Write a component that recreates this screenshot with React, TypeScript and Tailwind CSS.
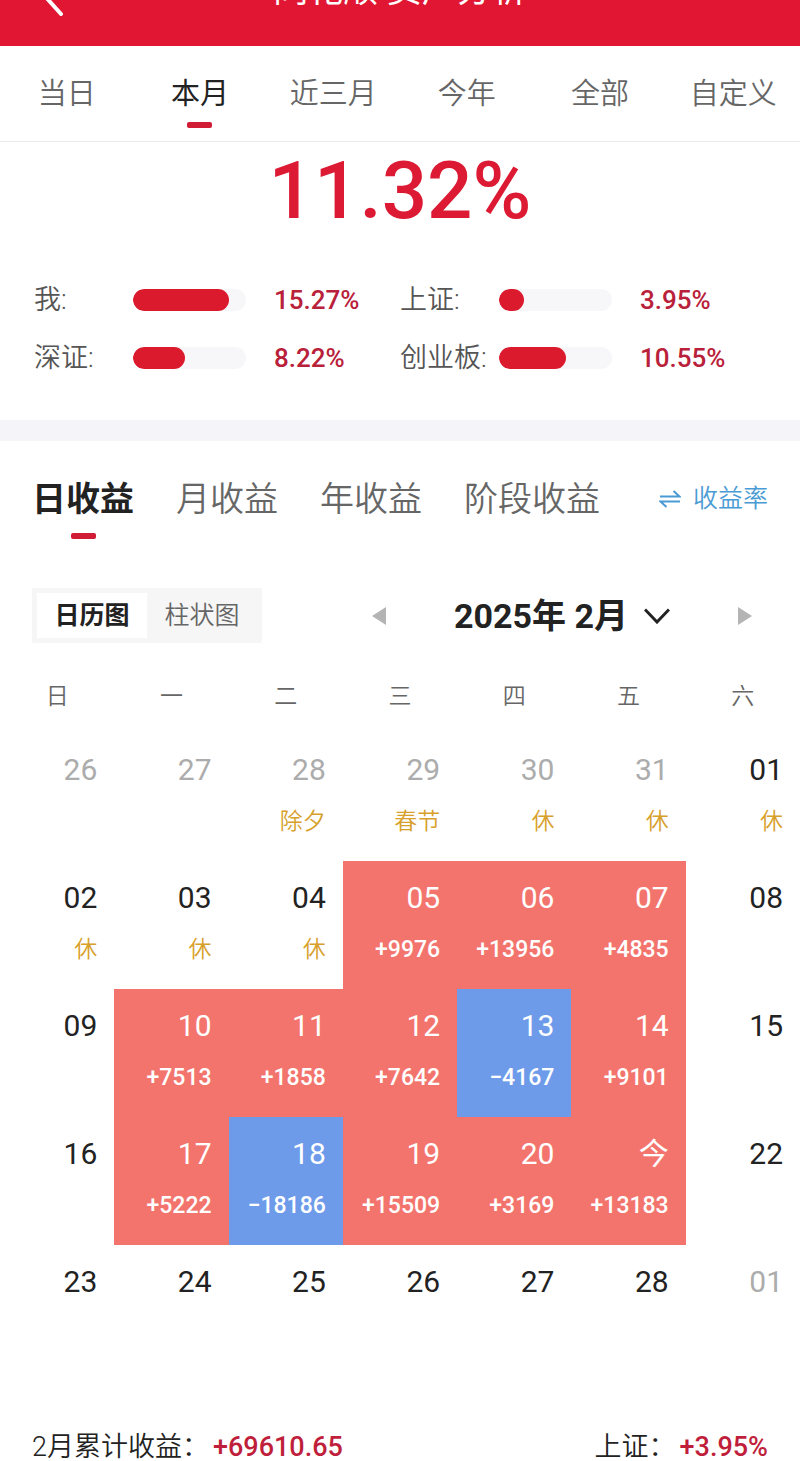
import { useState } from "react";
import clsx from "clsx";

type Day = {
  day: string;
  note?: string;
  profit?: number;
  outside?: boolean;
};

const ranges = ["当日", "本月", "近三月", "今年", "全部", "自定义"];

const benchmarks = [
  { name: "我", value: "15.27%", fill: 85 },
  { name: "上证", value: "3.95%", fill: 22 },
  { name: "深证", value: "8.22%", fill: 46 },
  { name: "创业板", value: "10.55%", fill: 59 },
];

const periods = ["日收益", "月收益", "年收益", "阶段收益"];

const views = ["日历图", "柱状图"];

const months = ["2025年 1月", "2025年 2月", "2025年 3月"];

const weekdays = ["日", "一", "二", "三", "四", "五", "六"];

const weeks: Day[][] = [
  [
    { day: "26", outside: true },
    { day: "27", outside: true },
    { day: "28", note: "除夕", outside: true },
    { day: "29", note: "春节", outside: true },
    { day: "30", note: "休", outside: true },
    { day: "31", note: "休", outside: true },
    { day: "01", note: "休" },
  ],
  [
    { day: "02", note: "休" },
    { day: "03", note: "休" },
    { day: "04", note: "休" },
    { day: "05", profit: 9976 },
    { day: "06", profit: 13956 },
    { day: "07", profit: 4835 },
    { day: "08" },
  ],
  [
    { day: "09" },
    { day: "10", profit: 7513 },
    { day: "11", profit: 1858 },
    { day: "12", profit: 7642 },
    { day: "13", profit: -4167 },
    { day: "14", profit: 9101 },
    { day: "15" },
  ],
  [
    { day: "16" },
    { day: "17", profit: 5222 },
    { day: "18", profit: -18186 },
    { day: "19", profit: 15509 },
    { day: "20", profit: 3169 },
    { day: "今", profit: 13183 },
    { day: "22" },
  ],
  [
    { day: "23" },
    { day: "24" },
    { day: "25" },
    { day: "26" },
    { day: "27" },
    { day: "28" },
    { day: "01", outside: true },
  ],
];

function formatProfit(value: number) {
  return value < 0 ? `−${Math.abs(value)}` : `+${value}`;
}

function DayCell({ day, note, profit, outside }: Day) {
  return (
    <td
      className={clsx(
        "h-32 pt-[17px] pr-[17px] text-right align-top",
        profit === undefined && (outside ? "text-[#acacac]" : "text-[#222]"),
        profit !== undefined && "text-white",
        profit !== undefined && (profit < 0 ? "bg-[#6d9bea]" : "bg-[#f3746d]")
      )}
    >
      <div className="text-[30px] leading-10">{day}</div>
      {note && (
        <div className="mt-4 text-[23px] leading-8 font-[350] text-[#d7a02a]">
          {note}
        </div>
      )}
      {profit !== undefined && (
        <div className="mt-4 text-[23px] leading-8 font-medium">
          {formatProfit(profit)}
        </div>
      )}
    </td>
  );
}

export default function App() {
  const [range, setRange] = useState("本月");
  const [period, setPeriod] = useState("日收益");
  const [view, setView] = useState("日历图");
  const [month, setMonth] = useState("2025年 2月");

  return (
    <div className="bg-white font-[Roboto,'Noto_Sans_CJK_SC',sans-serif] text-[#222]">
      {/* Title bar */}
      <header className="grid h-[46px] grid-cols-[1fr_auto_1fr] content-end items-end overflow-hidden bg-[#e01632] pb-[30px] text-white">
        <button type="button" aria-label="返回" className="ml-10 w-6">
          <svg viewBox="0 0 24 44" className="h-11 w-6" fill="none">
            <path
              d="M21 2 3 22 21 42"
              stroke="currentColor"
              strokeWidth="4"
              strokeLinecap="round"
            />
          </svg>
        </button>
        <h1 className="text-[35px] leading-[50px]">同花顺 资产分析</h1>
      </header>

      {/* Range tabs */}
      <nav className="grid grid-cols-6 border-b border-[#ececec]">
        {ranges.map((item) => (
          <button
            key={item}
            type="button"
            onClick={() => setRange(item)}
            className={clsx(
              "flex h-[95px] flex-col items-center pt-7 text-[29px] leading-10",
              range === item ? "text-[#222]" : "font-[350] text-[#666]"
            )}
          >
            {item}
            {range === item && (
              <span className="mt-2 h-1.5 w-[25px] rounded-xs bg-[#d01c34]" />
            )}
          </button>
        ))}
      </nav>

      {/* Summary */}
      <section className="pb-[33px]">
        <p className="text-center text-[80px] leading-[98px] font-medium text-[#dc1a33]">
          11.32%
        </p>
        <ul className="mt-[31px] grid grid-cols-2 px-[34px]">
          {benchmarks.map((item) => (
            <li key={item.name} className="flex h-[58px] items-center">
              <span className="w-[99px] text-[27px] font-[350] whitespace-nowrap text-[#555]">
                {item.name}:
              </span>
              <div className="h-[22px] w-[113px] overflow-hidden rounded-full bg-[#f7f7f9]">
                <div
                  className="h-full rounded-full bg-[#dc1a2e]"
                  style={{ width: `${item.fill}%` }}
                />
              </div>
              <span className="ml-7 text-[26px] font-medium text-[#b9203a]">
                {item.value}
              </span>
            </li>
          ))}
        </ul>
      </section>

      <div className="h-[21px] bg-[#f4f4f9]" />

      {/* Period tabs */}
      <section className="flex justify-between px-8 pt-[33px]">
        <div className="flex gap-[42px]">
          {periods.map((item) => (
            <button
              key={item}
              type="button"
              onClick={() => setPeriod(item)}
              className={clsx(
                "flex h-[66px] flex-col items-center text-[34px] leading-[50px] whitespace-nowrap",
                period === item ? "font-bold" : "font-[350] text-[#666]"
              )}
            >
              {item}
              {period === item && (
                <span className="mt-[9px] h-1.5 w-[25px] rounded-xs bg-[#d01c34]" />
              )}
            </button>
          ))}
        </div>
        <button
          type="button"
          className="flex h-[50px] items-center gap-3 text-[25px] whitespace-nowrap text-[#4a9bd4]"
        >
          <svg
            viewBox="0 0 22 18"
            className="h-[18px] w-[22px]"
            fill="none"
            stroke="currentColor"
            strokeWidth="2"
          >
            <path d="M1 6.500h19.500L14.500 1M21 11.500H1.500L7.500 17" />
          </svg>
          <span className="font-[350]">收益率</span>
        </button>
      </section>

      {/* View switch and month picker */}
      <section className="mt-12 flex items-center justify-between pr-12 pl-8">
        <div className="flex rounded-xs bg-[#f6f6f6] p-[5px]">
          {views.map((item) => (
            <button
              key={item}
              type="button"
              onClick={() => setView(item)}
              className={clsx(
                "h-[45px] w-[110px] text-[25px]",
                view === item ? "bg-white font-bold" : "font-[350] text-[#666]"
              )}
            >
              {item}
            </button>
          ))}
        </div>
        <div className="flex w-[380px] items-center justify-between">
          <button type="button" aria-label="上个月">
            <svg viewBox="0 0 14 18" className="h-[18px] w-3.5 fill-[#b4b4b4]">
              <path d="M14 0v18L0 9z" />
            </svg>
          </button>
          <label className="flex items-center gap-4">
            <select
              aria-label="月份"
              value={month}
              onChange={(e) => setMonth(e.target.value)}
              className="appearance-none text-[34px] leading-[50px] font-bold"
            >
              {months.map((item) => (
                <option key={item}>{item}</option>
              ))}
            </select>
            <svg
              viewBox="0 0 26 16"
              className="h-4 w-[26px]"
              fill="none"
              stroke="currentColor"
              strokeWidth="3"
            >
              <path d="M1 1.500 13 14 25 1.500" />
            </svg>
          </label>
          <button type="button" aria-label="下个月">
            <svg viewBox="0 0 14 18" className="h-[18px] w-3.5 fill-[#b4b4b4]">
              <path d="M0 0v18l14-9z" />
            </svg>
          </button>
        </div>
      </section>

      {/* Calendar */}
      <table className="mt-3.5 w-full table-fixed">
        <thead>
          <tr>
            {weekdays.map((item) => (
              <th
                key={item}
                scope="col"
                className="h-[76px] pt-1 text-[23px] font-[350] text-[#666]"
              >
                {item}
              </th>
            ))}
          </tr>
        </thead>
        <tbody>
          {weeks.map((week, i) => (
            <tr key={i}>
              {week.map((item) => (
                <DayCell key={item.day} {...item} />
              ))}
            </tr>
          ))}
        </tbody>
      </table>

      {/* Month total */}
      <footer className="flex justify-between px-8 pt-[60px] text-[27px] leading-7">
        <p className="flex gap-1">
          <span className="font-[350]">2月累计收益：</span>
          <span className="font-medium text-[#c01f3c]">+69610.65</span>
        </p>
        <p className="flex gap-1">
          <span className="font-[350]">上证：</span>
          <span className="font-medium text-[#c01f3c]">+3.95%</span>
        </p>
      </footer>
    </div>
  );
}
